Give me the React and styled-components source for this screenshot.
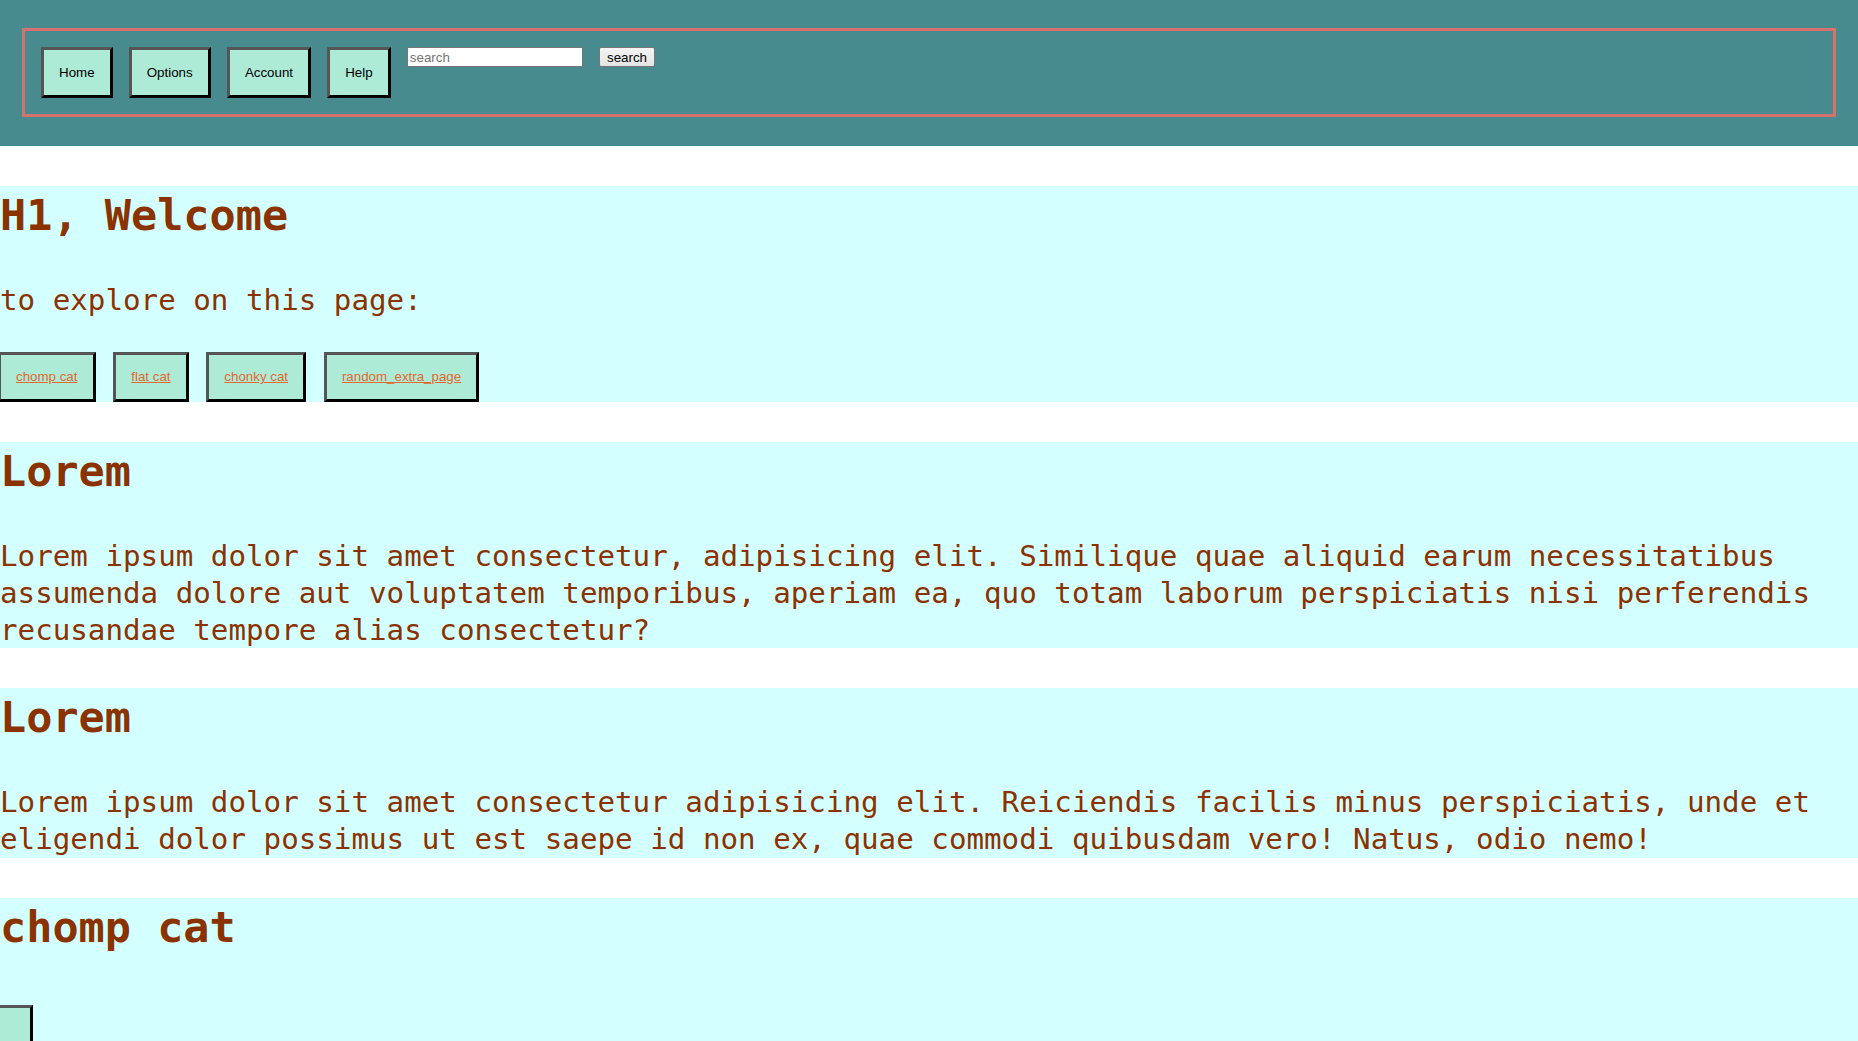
import React from "react";
import styled, { createGlobalStyle } from "styled-components";

const GlobalStyle = createGlobalStyle`
  html, body {
    margin: 0;
    padding: 0;
    background: #fff;
  }
  body {
    font-family: "Liberation Sans", Arial, sans-serif;
    overflow: hidden;
  }
`;

const COLOR = {
  teal: "#488b8f",
  coral: "#d7716e",
  mint: "#aeebd7",
  sky: "#d4ffff",
  brown: "#8a3300",
  orange: "#e0692f",
};

const Header = styled.header`
  background: ${COLOR.teal};
  padding: 28px 22px 29px;
`;

const Nav = styled.nav`
  display: flex;
  align-items: flex-start;
  gap: 16.2px;
  border: 3px solid ${COLOR.coral};
  padding: 16px;
`;

const NavButton = styled.button`
  background: ${COLOR.mint};
  border: 3px solid;
  border-color: #555 #000 #000 #555;
  padding: 15px;
  margin: 0;
  font-family: "Liberation Sans", Arial, sans-serif;
  font-size: 13.33px;
  line-height: 15px;
  color: #000;
  cursor: pointer;
`;

const SearchInput = styled.input`
  box-sizing: border-box;
  width: 176px;
  height: 20px;
  margin: 0;
  padding: 1px 2px;
  border: 1px solid #767676;
  background: #fff;
  font-family: "Liberation Sans", Arial, sans-serif;
  font-size: 13.33px;
  color: #000;

  &::placeholder {
    color: #757575;
  }
`;

const SearchButton = styled.button`
  box-sizing: border-box;
  height: 20px;
  margin: 0;
  padding: 1px 7px;
  border: 1px solid #767676;
  border-radius: 2px;
  background: linear-gradient(#f4f4f4, #e4e4e4);
  font-family: "Liberation Sans", Arial, sans-serif;
  font-size: 13.33px;
  line-height: 15px;
  color: #000;
`;

const Main = styled.main`
  display: flex;
  flex-direction: column;
  gap: 40px;
  padding-top: 40px;
`;

const Section = styled.section`
  background: ${COLOR.sky};
  color: ${COLOR.brown};
  font-family: "DejaVu Sans Mono", "Liberation Mono", monospace;
`;

const Heading = styled.h1`
  margin: 0;
  font-size: 43.5px;
  line-height: 58px;
  font-weight: bold;
`;

const Text = styled.p`
  margin: 38px 0 0;
  font-size: 29.2px;
  line-height: 36.7px;
`;

const LinkRow = styled.div`
  display: flex;
  gap: 17.8px;
  margin: 33.5px 0 0 -2px;
`;

const LinkButton = styled.a`
  display: block;
  background: ${COLOR.mint};
  border: 3px solid;
  border-color: #555 #000 #000 #555;
  padding: 15px;
  font-family: "Liberation Sans", Arial, sans-serif;
  font-size: 13.33px;
  line-height: 14px;
  color: ${COLOR.orange};
  text-decoration: underline;
  cursor: pointer;
`;

const CatButton = styled.button`
  display: block;
  width: 36px;
  height: 51px;
  margin: 49px 0 0 -3px;
  padding: 15px;
  background: ${COLOR.mint};
  border: 3px solid;
  border-color: #555 #000 #000 #555;
`;

const links = ["chomp cat", "flat cat", "chonky cat", "random_extra_page"];

export default function App() {
  return (
    <>
      <GlobalStyle />
      <Header>
        <Nav>
          {["Home", "Options", "Account", "Help"].map((label) => (
            <NavButton key={label}>{label}</NavButton>
          ))}
          <SearchInput type="text" placeholder="search" />
          <SearchButton>search</SearchButton>
        </Nav>
      </Header>
      <Main>
        <Section>
          <Heading>H1, Welcome</Heading>
          <Text>to explore on this page:</Text>
          <LinkRow>
            {links.map((l) => (
              <LinkButton key={l} href="#">
                {l}
              </LinkButton>
            ))}
          </LinkRow>
        </Section>
        <Section>
          <Heading>Lorem</Heading>
          <Text>
            Lorem ipsum dolor sit amet consectetur, adipisicing elit. Similique
            quae aliquid earum necessitatibus assumenda dolore aut voluptatem
            temporibus, aperiam ea, quo totam laborum perspiciatis nisi
            perferendis recusandae tempore alias consectetur?
          </Text>
        </Section>
        <Section>
          <Heading>Lorem</Heading>
          <Text>
            Lorem ipsum dolor sit amet consectetur adipisicing elit. Reiciendis
            facilis minus perspiciatis, unde et eligendi dolor possimus ut est
            saepe id non ex, quae commodi quibusdam vero! Natus, odio nemo!
          </Text>
        </Section>
        <Section>
          <Heading>chomp cat</Heading>
          <CatButton aria-label="chomp cat" />
        </Section>
      </Main>
    </>
  );
}
